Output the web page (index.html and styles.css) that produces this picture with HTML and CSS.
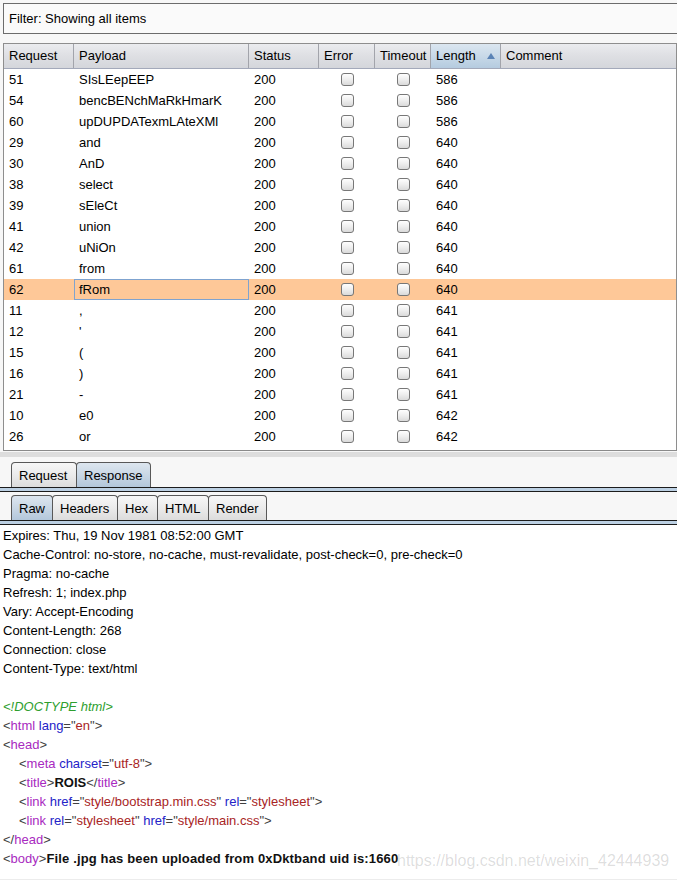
FILE: index.html
```html
<!DOCTYPE html>
<html lang="en">
<head>
<meta charset="utf-8">
<title>Intruder results</title>
<link rel="stylesheet" href="styles.css">
</head>
<body>
<div class="filter">Filter: Showing all items</div>

<div class="table">
  <div class="thead">
    <div class="th">Request</div>
    <div class="th">Payload</div>
    <div class="th">Status</div>
    <div class="th">Error</div>
    <div class="th">Timeout</div>
    <div class="th sorted">Length<span class="arrow"></span></div>
    <div class="th last">Comment</div>
  </div>
  <div class="tbody">
    <div class="row"><div class="td">51</div><div class="td">SIsLEepEEP</div><div class="td">200</div><div class="td c"><span class="cb"></span></div><div class="td c"><span class="cb"></span></div><div class="td">586</div><div class="td"></div></div>
    <div class="row"><div class="td">54</div><div class="td">bencBENchMaRkHmarK</div><div class="td">200</div><div class="td c"><span class="cb"></span></div><div class="td c"><span class="cb"></span></div><div class="td">586</div><div class="td"></div></div>
    <div class="row"><div class="td">60</div><div class="td">upDUPDATexmLAteXMl</div><div class="td">200</div><div class="td c"><span class="cb"></span></div><div class="td c"><span class="cb"></span></div><div class="td">586</div><div class="td"></div></div>
    <div class="row"><div class="td">29</div><div class="td">and</div><div class="td">200</div><div class="td c"><span class="cb"></span></div><div class="td c"><span class="cb"></span></div><div class="td">640</div><div class="td"></div></div>
    <div class="row"><div class="td">30</div><div class="td">AnD</div><div class="td">200</div><div class="td c"><span class="cb"></span></div><div class="td c"><span class="cb"></span></div><div class="td">640</div><div class="td"></div></div>
    <div class="row"><div class="td">38</div><div class="td">select</div><div class="td">200</div><div class="td c"><span class="cb"></span></div><div class="td c"><span class="cb"></span></div><div class="td">640</div><div class="td"></div></div>
    <div class="row"><div class="td">39</div><div class="td">sEleCt</div><div class="td">200</div><div class="td c"><span class="cb"></span></div><div class="td c"><span class="cb"></span></div><div class="td">640</div><div class="td"></div></div>
    <div class="row"><div class="td">41</div><div class="td">union</div><div class="td">200</div><div class="td c"><span class="cb"></span></div><div class="td c"><span class="cb"></span></div><div class="td">640</div><div class="td"></div></div>
    <div class="row"><div class="td">42</div><div class="td">uNiOn</div><div class="td">200</div><div class="td c"><span class="cb"></span></div><div class="td c"><span class="cb"></span></div><div class="td">640</div><div class="td"></div></div>
    <div class="row"><div class="td">61</div><div class="td">from</div><div class="td">200</div><div class="td c"><span class="cb"></span></div><div class="td c"><span class="cb"></span></div><div class="td">640</div><div class="td"></div></div>
    <div class="row selected"><div class="td">62</div><div class="td focus">fRom</div><div class="td">200</div><div class="td c"><span class="cb"></span></div><div class="td c"><span class="cb"></span></div><div class="td">640</div><div class="td"></div></div>
    <div class="row"><div class="td">11</div><div class="td">,</div><div class="td">200</div><div class="td c"><span class="cb"></span></div><div class="td c"><span class="cb"></span></div><div class="td">641</div><div class="td"></div></div>
    <div class="row"><div class="td">12</div><div class="td">'</div><div class="td">200</div><div class="td c"><span class="cb"></span></div><div class="td c"><span class="cb"></span></div><div class="td">641</div><div class="td"></div></div>
    <div class="row"><div class="td">15</div><div class="td">(</div><div class="td">200</div><div class="td c"><span class="cb"></span></div><div class="td c"><span class="cb"></span></div><div class="td">641</div><div class="td"></div></div>
    <div class="row"><div class="td">16</div><div class="td">)</div><div class="td">200</div><div class="td c"><span class="cb"></span></div><div class="td c"><span class="cb"></span></div><div class="td">641</div><div class="td"></div></div>
    <div class="row"><div class="td">21</div><div class="td">-</div><div class="td">200</div><div class="td c"><span class="cb"></span></div><div class="td c"><span class="cb"></span></div><div class="td">641</div><div class="td"></div></div>
    <div class="row"><div class="td">10</div><div class="td">e0</div><div class="td">200</div><div class="td c"><span class="cb"></span></div><div class="td c"><span class="cb"></span></div><div class="td">642</div><div class="td"></div></div>
    <div class="row"><div class="td">26</div><div class="td">or</div><div class="td">200</div><div class="td c"><span class="cb"></span></div><div class="td c"><span class="cb"></span></div><div class="td">642</div><div class="td"></div></div>
  </div>
</div>

<div class="divider"></div>

<div class="tabs tabs-top">
  <div class="tab w-request">Request</div>
  <div class="tab active w-response">Response</div>
</div>
<div class="strip"></div>

<div class="tabs tabs-sub">
  <div class="tab active w-raw">Raw</div>
  <div class="tab w-headers">Headers</div>
  <div class="tab w-hex">Hex</div>
  <div class="tab w-html">HTML</div>
  <div class="tab w-render">Render</div>
</div>
<div class="strip"></div>

<div class="content">
  <div class="line">Expires: Thu, 19 Nov 1981 08:52:00 GMT</div>
  <div class="line">Cache-Control: no-store, no-cache, must-revalidate, post-check=0, pre-check=0</div>
  <div class="line">Pragma: no-cache</div>
  <div class="line">Refresh: 1; index.php</div>
  <div class="line">Vary: Accept-Encoding</div>
  <div class="line">Content-Length: 268</div>
  <div class="line">Connection: close</div>
  <div class="line">Content-Type: text/html</div>
  <div class="line"></div>
  <div class="line"><span class="doc">&lt;!DOCTYPE html&gt;</span></div>
  <div class="line"><span class="br">&lt;</span><span class="tg">html</span> <span class="at">lang</span><span class="br">="</span><span class="va">en</span><span class="br">"&gt;</span></div>
  <div class="line"><span class="br">&lt;</span><span class="tg">head</span><span class="br">&gt;</span></div>
  <div class="line ind"><span class="br">&lt;</span><span class="tg">meta</span> <span class="at">charset</span><span class="br">="</span><span class="va">utf-8</span><span class="br">"&gt;</span></div>
  <div class="line ind"><span class="br">&lt;</span><span class="tg">title</span><span class="br">&gt;</span><b>ROIS</b><span class="br">&lt;/</span><span class="tg">title</span><span class="br">&gt;</span></div>
  <div class="line ind"><span class="br">&lt;</span><span class="tg">link</span> <span class="at">href</span><span class="br">="</span><span class="va">style/bootstrap.min.css</span><span class="br">"</span> <span class="at">rel</span><span class="br">="</span><span class="va">stylesheet</span><span class="br">"&gt;</span></div>
  <div class="line ind"><span class="br">&lt;</span><span class="tg">link</span> <span class="at">rel</span><span class="br">="</span><span class="va">stylesheet</span><span class="br">"</span> <span class="at">href</span><span class="br">="</span><span class="va">style/main.css</span><span class="br">"&gt;</span></div>
  <div class="line"><span class="br">&lt;/</span><span class="tg">head</span><span class="br">&gt;</span></div>
  <div class="line"><span class="br">&lt;</span><span class="tg">body</span><span class="br">&gt;</span><b class="msg">File .jpg has been uploaded from 0xDktband uid is:1660</b></div>
</div>

<div class="watermark">https://blog.csdn.net/weixin_42444939</div>
</body>
</html>
```

FILE: styles.css
```css
* { box-sizing: border-box; }

html, body {
  margin: 0;
  padding: 0;
  overflow: hidden;
}

body {
  width: 677px;
  height: 880px;
  background: #f7f7f7;
  font-family: "Liberation Sans", Arial, sans-serif;
  font-size: 13px;
  color: #000;
  position: relative;
}

/* Filter bar */
.filter {
  margin: 3px 0 0 3px;
  height: 31px;
  border: 1px solid #6c6c6c;
  border-right: none;
  background: #fafafa;
  padding-left: 5px;
  display: flex;
  align-items: center;
}

/* Results table */
.table {
  margin: 9px 0 0 3px;
  width: 674px;
  border: 1px solid #8e8e8e;
  border-bottom-color: #8a8a8a;
  background: #fff;
}

.thead,
.row {
  display: grid;
  grid-template-columns: 70px 175px 70px 56px 56px 70px 175px;
}

.thead {
  height: 25px;
  border-bottom: 1px solid #a3a9ba;
  background: linear-gradient(#ebecef 0%, #dfe0e4 45%, #d4d6db 100%);
}

.th {
  display: flex;
  align-items: center;
  padding-left: 5px;
  padding-bottom: 1px;
  border-right: 1px solid #a2a4ab;
  white-space: nowrap;
}

.th.last { border-right: none; }

.th.sorted {
  background: linear-gradient(#dbe6f0 0%, #c8d9e8 50%, #b5cbdf 100%);
}

.arrow {
  margin-left: auto;
  margin-right: 5px;
  width: 0;
  height: 0;
  border-left: 4px solid transparent;
  border-right: 4px solid transparent;
  border-bottom: 6px solid #5b83b5;
}

.tbody {
  padding-bottom: 3px;
}

.row {
  height: 21px;
}

.td {
  display: flex;
  align-items: center;
  padding-left: 5px;
  white-space: nowrap;
}

.td.c {
  justify-content: center;
  padding-left: 0;
}

.row.selected {
  background: #fec898;
}

.td.focus {
  border: 1px solid #7fa3cf;
  padding-left: 4px;
}

.cb {
  display: block;
  width: 13px;
  height: 13px;
  border: 1px solid #777;
  border-radius: 3px;
  background: linear-gradient(#fefefe 0%, #eeeeee 50%, #dadada 100%);
}

/* Split divider */
.divider {
  margin-top: 1px;
  height: 5px;
  background: #dddddd;
}

/* Tabs */
.tabs {
  display: flex;
  align-items: flex-end;
  padding-left: 11px;
}

.tabs-top { margin-top: 5px; }
.tabs-sub { margin-top: 3px; }

.tab {
  height: 25px;
  border: 1px solid #585858;
  border-bottom: none;
  border-radius: 4px 4px 0 0;
  padding-left: 7px;
  display: flex;
  align-items: center;
  background: linear-gradient(#f7f7f7 0%, #ebebeb 50%, #dcdcdc 100%);
  white-space: nowrap;
}

.tab + .tab { margin-left: -1px; }

.tab.active {
  background: linear-gradient(#dde6ef 0%, #c9d7e5 50%, #b3c7db 100%);
}

.w-request { width: 66px; }
.w-response { width: 75px; }
.w-raw { width: 42px; }
.w-headers { width: 66px; }
.w-hex { width: 41px; }
.w-html { width: 52px; }
.w-render { width: 59px; }

.strip {
  height: 5px;
  border-top: 1px solid #1c1c1c;
  border-bottom: 1px solid #1c1c1c;
  background: #bcd0e3;
}

/* Response body */
.content {
  background: #fff;
  height: 355px;
  padding: 1px 3px 0 3px;
  border-bottom: 1px solid #ececec;
}

.line {
  height: 19px;
  line-height: 19px;
  white-space: pre;
}

.line.ind { padding-left: 16px; }

.doc { color: #2e9e2e; font-style: italic; }
.br { color: #404040; }
.tg { color: #a82ac0; }
.at { color: #2323c8; }
.va { color: #a82424; }

b { font-weight: bold; color: #111; }

.msg { letter-spacing: 0.15px; }

.watermark {
  position: absolute;
  left: 397px;
  top: 851px;
  font-size: 16px;
  line-height: 20px;
  color: rgba(0, 0, 0, 0.14);
  white-space: nowrap;
}
```
